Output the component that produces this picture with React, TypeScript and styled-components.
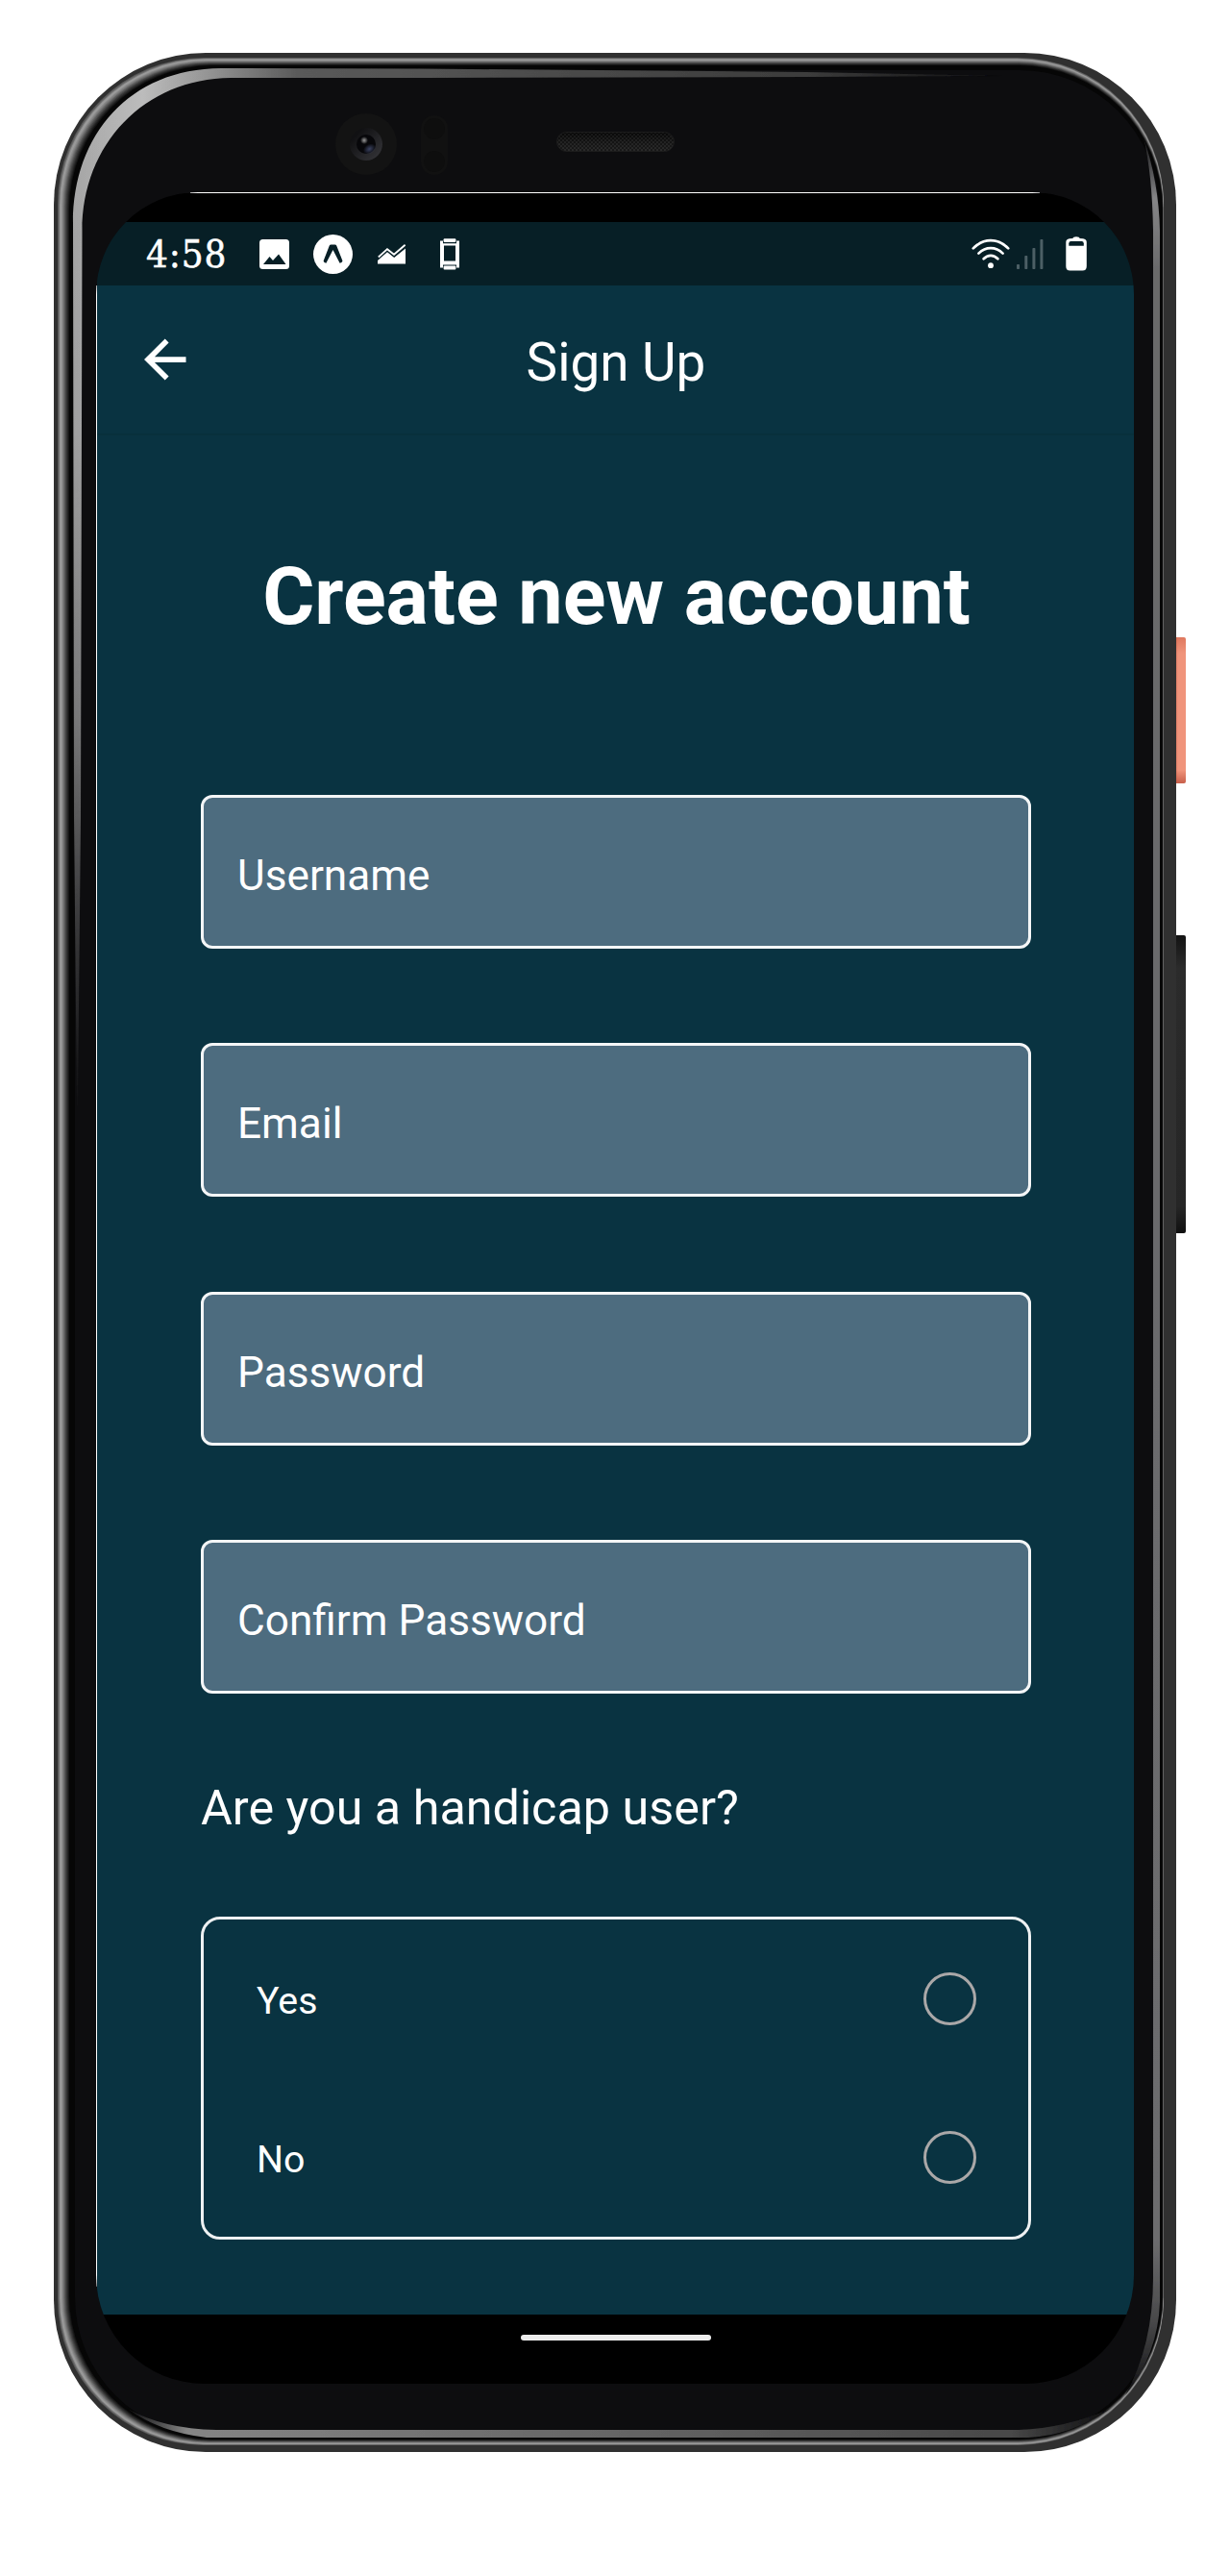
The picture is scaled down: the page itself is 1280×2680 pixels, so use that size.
import React, { useState } from 'react';
import styled, { createGlobalStyle } from 'styled-components';

const color = {
  teal: '#093341',
  status: '#071f26',
  field: '#4d6c7f',
  glass: '#0d0d0f',
  rim: '#303030',
};

const GlobalStyle = createGlobalStyle`
  *, *::before, *::after { box-sizing: border-box; }
  body {
    margin: 0;
    background: #fff;
    font-family: Roboto, 'Liberation Sans', sans-serif;
  }
`;

const Page = styled.main`
  width: 1280px;
  height: 2680px;
  padding: 55px 56px 0;
  overflow: hidden;
`;

const Phone = styled.div`
  position: relative;
  width: 1168px;
  height: 2496px;
  border-radius: 158px;
  background: ${color.rim};
`;

const FrameArt = styled.svg`
  position: absolute;
  inset: 0;
  display: block;
`;

const SideKey = styled.span<{ $top: number; $height: number; $fill: string }>`
  position: absolute;
  left: 100%;
  top: ${(p) => p.$top}px;
  width: 10px;
  height: ${(p) => p.$height}px;
  border-radius: 0 2px 2px 0;
  background: ${(p) => p.$fill};
`;

const Body = styled.div`
  position: relative;
  display: flex;
  flex-direction: column;
  height: 100%;
  padding: 0 44px 71px;
`;

const TopBezel = styled.div`
  display: flex;
  align-items: center;
  height: 145px;
  padding: 45px 0 0 249px;
`;

const Sensor = styled.svg<{ $gap?: number; $drop?: number }>`
  flex: none;
  display: block;
  margin-left: ${(p) => p.$gap ?? 0}px;
  margin-top: ${(p) => p.$drop ?? 0}px;
`;

const Screen = styled.div`
  display: flex;
  flex-direction: column;
  flex: 1;
  padding: 1px 0 0 1px;
  border-radius: 106px 106px 113px 113px;
  background:
    linear-gradient(#fff, #fff) 50% 0 / 884px 1px no-repeat,
    linear-gradient(#fff, #fff) 0 97px / 1px 2082px no-repeat,
    ${color.glass};
  overflow: hidden;
`;

const Notch = styled.div`
  height: 30px;
  background: #000;
`;

const StatusBar = styled.div`
  display: flex;
  align-items: center;
  justify-content: space-between;
  height: 66px;
  padding: 0 49px 0 51px;
  background: ${color.status};
`;

const StatusGroup = styled.div`
  display: flex;
  align-items: center;
`;

const Clock = styled.span`
  width: 84px;
  font-family: 'DejaVu Serif Condensed', 'DejaVu Serif', serif;
  font-stretch: condensed;
  font-size: 40px;
  line-height: 66px;
  letter-spacing: 0.9px;
  -webkit-text-stroke: 0.5px #fff;
  white-space: nowrap;
  color: #fff;
`;

const StatusIcon = styled.svg<{ $gap: number }>`
  flex: none;
  display: block;
  margin-left: ${(p) => p.$gap}px;
`;

const App = styled.div`
  display: flex;
  flex-direction: column;
  flex: 1;
  background: ${color.teal};
  color: #fff;
`;

const Header = styled.header`
  display: grid;
  grid-template-columns: 140px 1fr 140px;
  align-items: center;
  height: 156px;
  border-bottom: 2px solid #08303c;
`;

const BackButton = styled.button`
  display: flex;
  margin-left: 49px;
  padding: 0;
  border: 0;
  background: none;
  width: 44px;
`;

const HeaderTitle = styled.h1`
  margin: 0;
  padding: 5px 0 0 1px;
  font-size: 54.8px;
  font-weight: 400;
  line-height: 64px;
  text-align: center;
`;

const Form = styled.form`
  display: flex;
  flex-direction: column;
  padding: 120px 107px 0 108px;
`;

const Title = styled.h2`
  margin: 0 0 158px;
  padding-left: 1px;
  font-size: 82.8px;
  font-weight: 700;
  line-height: 96px;
  text-align: center;
  white-space: nowrap;
`;

const Fields = styled.div`
  display: flex;
  flex-direction: column;
  gap: 98.4px;
`;

const Field = styled.input`
  width: 100%;
  height: 160px;
  padding: 8px 34px 0 35px;
  border: 3px solid #f4f6f7;
  border-radius: 12px;
  outline: none;
  background: ${color.field};
  color: #fff;
  font: 400 44.2px/52px Roboto, sans-serif;
  &::placeholder { color: #fff; opacity: 1; }
`;

const Question = styled.p`
  margin: 88.8px 0 83.2px;
  font-size: 50.3px;
  line-height: 60px;
  white-space: nowrap;
`;

const Options = styled.div`
  height: 336px;
  padding: 0 54px 0 55px;
  border: 3px solid #eef1f2;
  border-radius: 20px;
`;

const Option = styled.label`
  display: flex;
  align-items: center;
  justify-content: space-between;
  height: 165px;
`;

const OptionText = styled.span`
  padding-top: 5px;
  font-size: 39.3px;
  line-height: 48px;
`;

const Radio = styled.input`
  appearance: none;
  width: 55px;
  height: 55px;
  margin: 0;
  border: 3px solid #aaa8a8;
  border-radius: 50%;
  &:checked { background: radial-gradient(circle, #fff 45%, transparent 48%); }
`;

const NavBar = styled.div`
  display: flex;
  justify-content: center;
  height: 72px;
  padding-top: 21px;
  background: #000;
`;

const NavPill = styled.span`
  width: 198px;
  height: 6.4px;
  border-radius: 4px;
  background: #ededed;
`;

const RIM_STEPS = 12;
const rimStops: [number, number][] = [[0, 88], [0.1, 115], [0.2, 165], [0.4, 130], [0.7, 60], [1, 6]];

function rimShade(t: number) {
  for (let i = 1; i < rimStops.length; i++) {
    const [t1, v1] = rimStops[i];
    const [t0, v0] = rimStops[i - 1];
    if (t <= t1) {
      const v = Math.round(v0 + ((v1 - v0) * (t - t0)) / (t1 - t0));
      return `rgb(${v},${v},${v})`;
    }
  }
  return '#060606';
}

function PhoneFrame() {
  return (
    <FrameArt width="1168" height="2496" viewBox="56 55 1168 2496" aria-hidden>
      <defs>
        <linearGradient id="topGlow" gradientUnits="userSpaceOnUse" x1="76" x2="1045" y1="0" y2="0">
          <stop offset="0" stopColor="#a8a8a8" />
          <stop offset=".075" stopColor="#bdbdbd" />
          <stop offset=".16" stopColor="#8c8c8c" />
          <stop offset=".24" stopColor="#5a5a5a" />
          <stop offset=".79" stopColor="#3c3c3c" />
          <stop offset="1" stopColor="#0d0d0f" />
        </linearGradient>
        <linearGradient id="sideFade" gradientUnits="userSpaceOnUse" x1="0" x2="0" y1="70" y2="1160">
          <stop offset="0" stopColor="#fff" />
          <stop offset=".35" stopColor="#f0f0f0" />
          <stop offset=".62" stopColor="#b0b0b0" />
          <stop offset=".8" stopColor="#505050" />
          <stop offset="1" stopColor="#000" />
        </linearGradient>
        <mask id="sideMask" maskUnits="userSpaceOnUse" x="56" y="55" width="1168" height="1200">
          <rect x="56" y="55" width="1168" height="1200" fill="url(#sideFade)" />
        </mask>
        <filter id="soften" filterUnits="userSpaceOnUse" x="56" y="55" width="1168" height="2496">
          <feGaussianBlur stdDeviation="0.7" />
        </filter>
        <linearGradient id="rightGlow" gradientUnits="userSpaceOnUse" x1="0" x2="0" y1="140" y2="2495">
          <stop offset="0" stopColor="#0d0d0f" />
          <stop offset=".028" stopColor="#858587" />
          <stop offset=".06" stopColor="#6a6a6b" />
          <stop offset=".93" stopColor="#6c6c6e" />
          <stop offset=".965" stopColor="#4a4a4b" />
          <stop offset="1" stopColor="#0d0d0f" />
        </linearGradient>
        <linearGradient id="bottomGlow" gradientUnits="userSpaceOnUse" x1="133" x2="1155" y1="0" y2="0">
          <stop offset="0" stopColor="#0d0d0f" />
          <stop offset=".06" stopColor="#858585" />
          <stop offset=".4" stopColor="#6c6c6c" />
          <stop offset=".9" stopColor="#484848" />
          <stop offset="1" stopColor="#0d0d0f" />
        </linearGradient>
      </defs>
      {Array.from({ length: RIM_STEPS + 1 }, (_, i) => {
        const t = i / RIM_STEPS;
        const x = 60 + 12 * t;
        const y = 60 + 8 * t;
        return (
          <rect
            key={i}
            x={x}
            y={y}
            width={1211 - 1.2 * t - x}
            height={2544 - 6 * t - y}
            rx={152 - 2 * t}
            fill={rimShade(t)}
          />
        );
      })}
      <rect x="78" y="73" width="1128" height="2462" rx="145" fill={color.glass} />
      <g filter="url(#soften)">
        <path
          d="M80 1150 L77 850 L76 232 C76 140 135 71.5 230 71 L440 71.5 L840 75 L1045 79 L840 80 L440 81 L240 81 C150 82 85.5 150 85.5 240 L84 850 L81 1150Z"
          fill="url(#topGlow)"
          mask="url(#sideMask)"
        />
        <path
          d="M1190 143 Q1206 190 1207 240 L1207 2395 Q1205 2450 1171 2492 Q1200 2440 1200 2370 L1200 240 Q1199 180 1190 143Z"
          fill="url(#rightGlow)"
        />
        <path
          d="M133 2506 Q170 2527 225 2528 L1060 2528 Q1110 2526 1155 2506 Q1115 2534 1070 2536 L215 2536 Q165 2530 133 2506Z"
          fill="url(#bottomGlow)"
        />
      </g>
    </FrameArt>
  );
}

function Camera() {
  return (
    <Sensor width="64" height="64" viewBox="0 0 64 64">
      <defs>
        <linearGradient id="lens" x1="0" y1="0" x2="1" y2="1">
          <stop offset=".2" stopColor="#111113" />
          <stop offset="1" stopColor="#38383c" />
        </linearGradient>
        <radialGradient id="blue"><stop offset="0" stopColor="#3c4463" /><stop offset="1" stopColor="#3c4463" stopOpacity="0" /></radialGradient>
        <radialGradient id="spark"><stop offset="0" stopColor="#9a9a9a" /><stop offset="1" stopColor="#9a9a9a" stopOpacity="0" /></radialGradient>
      </defs>
      <circle cx="32" cy="32" r="32" fill="#131313" />
      <circle cx="32" cy="32" r="17" fill="url(#lens)" />
      <circle cx="32" cy="32" r="10" fill="#07070a" />
      <ellipse cx="35.5" cy="37" rx="7" ry="5" fill="url(#blue)" transform="rotate(-30 35.5 37)" />
      <circle cx="30" cy="28" r="4" fill="url(#spark)" />
    </Sensor>
  );
}

function Proximity() {
  return (
    <Sensor width="28" height="62" viewBox="0 0 28 62" $gap={25} $drop={2}>
      <rect width="28" height="62" rx="14" fill="#111111" />
      <circle cx="14" cy="14" r="11" fill="#0e0e0e" />
      <circle cx="14" cy="48" r="11" fill="#0e0e0e" />
    </Sensor>
  );
}

function Speaker() {
  return (
    <Sensor width="123" height="21" viewBox="0 0 123 21" $gap={113} $drop={-5}>
      <defs>
        <pattern id="mesh" width="4" height="4" patternUnits="userSpaceOnUse">
          <rect width="4" height="4" fill="#1f1f1f" />
          <rect width="2" height="2" fill="#0a0a0a" />
          <rect x="2" y="2" width="2" height="2" fill="#0a0a0a" />
        </pattern>
        <linearGradient id="meshShade" x1="0" x2="0" y1="0" y2="1">
          <stop offset="0" stopColor="#000" stopOpacity=".35" />
          <stop offset="1" stopColor="#555" stopOpacity=".2" />
        </linearGradient>
      </defs>
      <rect x=".5" y=".5" width="122" height="20" rx="10" fill="url(#mesh)" />
      <rect x=".5" y=".5" width="122" height="20" rx="10" fill="url(#meshShade)" stroke="#1c1c1c" />
    </Sensor>
  );
}

const PictureIcon = () => (
  <StatusIcon $gap={34} width="31" height="31" viewBox="0 0 31 31">
    <rect width="31" height="31" rx="3.5" fill="#fff" />
    <path d="M4 26 L10.5 18 L14 22 L20 15.5 L27.5 26Z" fill={color.status} />
  </StatusIcon>
);

const ExpoIcon = () => (
  <StatusIcon $gap={25} width="41" height="41" viewBox="0 0 41 41">
    <circle cx="20.5" cy="20.5" r="20.5" fill="#fff" />
    <path
      d="M16.8 11.5 Q17.2 10.5 18.5 10.5 H22.5 Q23.8 10.5 24.2 11.5 L30.5 27.5 Q30 29.5 27.6 29.7 L20.5 16 L13.4 29.7 Q11 29.5 10.6 27.5Z"
      fill={color.status}
    />
  </StatusIcon>
);

const ChartIcon = () => (
  <StatusIcon $gap={26} width="29" height="21" viewBox="0 0 29 21">
    <path d="M0 20.5 V17 L10 8.2 L17.2 14 L29 4.5 V20.5Z" fill="#fff" />
    <path d="M.8 13.5 L10 5.2 L17 10.8 L28.6 .8" fill="none" stroke="#fff" strokeWidth="1.8" />
  </StatusIcon>
);

const DeviceIcon = () => (
  <StatusIcon $gap={35.5} width="20" height="33" viewBox="0 0 20 33">
    <path fillRule="evenodd" fill="#fff" d="M0 2.5 H3 V5.2 H17 V2.5 H20 V30.5 H17 V27.6 H3 V30.5 H0Z M4 7.6 V23.6 H16 V7.6Z" />
    <rect x="3.6" y=".3" width="12.8" height="3.8" rx="1" fill="#fff" />
    <rect x="3.6" y="28.6" width="12.8" height="3.8" rx="1" fill="#fff" />
  </StatusIcon>
);

const WifiIcon = () => (
  <StatusIcon $gap={0} width="40" height="32" viewBox="0 0 40 32">
    <g fill="none" stroke="#fff" strokeWidth="2.7" strokeLinecap="round">
      <path d="M1.8 10.4 Q10 2.2 20 2.2 T38.2 10.4" />
      <path d="M7.4 15.6 Q13 10.2 20 10.2 T32.6 15.6" />
      <path d="M12.6 21.2 Q16 17.8 20 17.8 T27.4 21.2" />
    </g>
    <circle cx="20" cy="28.2" r="2.9" fill="#fff" />
  </StatusIcon>
);

const SignalIcon = () => (
  <StatusIcon $gap={7} width="28" height="31" viewBox="0 0 28 31">
    <g fill="#4c5f65">
      <rect x="0" y="26" width="3" height="5" rx=".8" />
      <rect x="8.3" y="17" width="3" height="14" rx=".8" />
      <rect x="16.4" y="9" width="3" height="22" rx=".8" />
      <rect x="24.4" y="0" width="3" height="31" rx=".8" />
    </g>
  </StatusIcon>
);

const BatteryIcon = () => (
  <StatusIcon $gap={23} width="22" height="36" viewBox="0 0 22 36">
    <path d="M7.5 2 Q7.5 .3 11 .3 T14.5 2 L18 2.2 Q21.8 2.6 21.8 6 V31 Q21.8 35.5 17.5 35.5 H4.5 Q.3 35.5 .3 31 V6 Q.3 2.6 4 2.2Z" fill="#fff" />
    <path d="M3.3 9.8 V7.2 Q3.3 5 5.5 5 H16.6 Q18.8 5 18.8 7.2 V9.8Z" fill={color.status} />
  </StatusIcon>
);

const BackIcon = () => (
  <svg width="45" height="44" viewBox="0 0 45 44">
    <path d="M22.2 0 L26.2 4.2 L11.2 19.2 H44.5 V25 H11.2 L26.2 39.8 L22.2 44 L0 22Z" fill="#fff" />
  </svg>
);

const FIELDS = [
  { name: 'username', label: 'Username', type: 'text' },
  { name: 'email', label: 'Email', type: 'email' },
  { name: 'password', label: 'Password', type: 'password' },
  { name: 'confirm', label: 'Confirm Password', type: 'password' },
];

export default function SignUpScreen() {
  const [answer, setAnswer] = useState('');
  return (
    <Page>
      <GlobalStyle />
      <Phone>
        <SideKey
          $top={608}
          $height={152}
          $fill="linear-gradient(90deg, rgba(190,80,60,.3), transparent 20%), linear-gradient(#df785e, #f0947b 11%, #f0947b 91%, #c85f4b)"
        />
        <SideKey $top={918} $height={310} $fill="linear-gradient(#131313, #2b2b2b 11%, #262626 91%, #101010)" />
        <PhoneFrame />
        <Body>
          <TopBezel>
            <Camera />
            <Proximity />
            <Speaker />
          </TopBezel>
          <Screen>
            <Notch />
            <StatusBar>
              <StatusGroup>
                <Clock>4:58</Clock>
                <PictureIcon />
                <ExpoIcon />
                <ChartIcon />
                <DeviceIcon />
              </StatusGroup>
              <StatusGroup>
                <WifiIcon />
                <SignalIcon />
                <BatteryIcon />
              </StatusGroup>
            </StatusBar>
            <App>
              <Header>
                <BackButton type="button" aria-label="Back">
                  <BackIcon />
                </BackButton>
                <HeaderTitle>Sign Up</HeaderTitle>
              </Header>
              <Form>
                <Title>Create new account</Title>
                <Fields>
                  {FIELDS.map((f) => (
                    <Field key={f.name} name={f.name} type={f.type} placeholder={f.label} />
                  ))}
                </Fields>
                <Question>Are you a handicap user?</Question>
                <Options>
                  {['Yes', 'No'].map((o) => (
                    <Option key={o}>
                      <OptionText>{o}</OptionText>
                      <Radio type="radio" name="handicap" checked={answer === o} onChange={() => setAnswer(o)} />
                    </Option>
                  ))}
                </Options>
              </Form>
            </App>
            <NavBar>
              <NavPill />
            </NavBar>
          </Screen>
        </Body>
      </Phone>
    </Page>
  );
}
